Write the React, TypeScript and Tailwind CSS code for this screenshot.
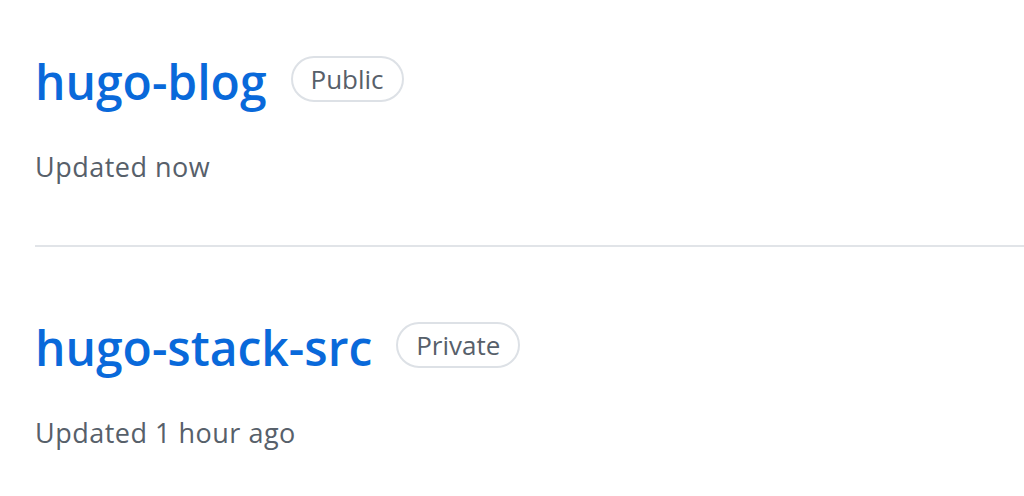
const repos = [
  { name: 'hugo-blog', visibility: 'Public', updated: 'Updated now' },
  { name: 'hugo-stack-src', visibility: 'Private', updated: 'Updated 1 hour ago' },
];

export default function App() {
  return (
    <div
      className="w-[1024px] h-[496px] overflow-hidden bg-white pl-[35px]"
      style={{ fontFamily: '"Open Sans", "Noto Sans", sans-serif' }}
    >
      {repos.map((repo, i) => (
        <div
          key={repo.name}
          className={i === 0 ? 'pt-[52px] pb-[61px] border-b-2 border-[#e1e4e8]' : 'pt-[71px]'}
        >
          <div className="flex items-center gap-[24px]">
            <a className="text-[48px] leading-[60px] font-semibold text-[#0969da]">{repo.name}</a>
            <span className="mb-[6px] rounded-full border-2 border-[#dde1e6] px-[18px] h-[46px] flex items-center text-[26px] font-medium text-[#57606a]">
              {repo.visibility}
            </span>
          </div>
          <p className="mt-[38px] text-[27px] leading-[34px] tracking-[0.5px] text-[#57606a]">{repo.updated}</p>
        </div>
      ))}
    </div>
  );
}
